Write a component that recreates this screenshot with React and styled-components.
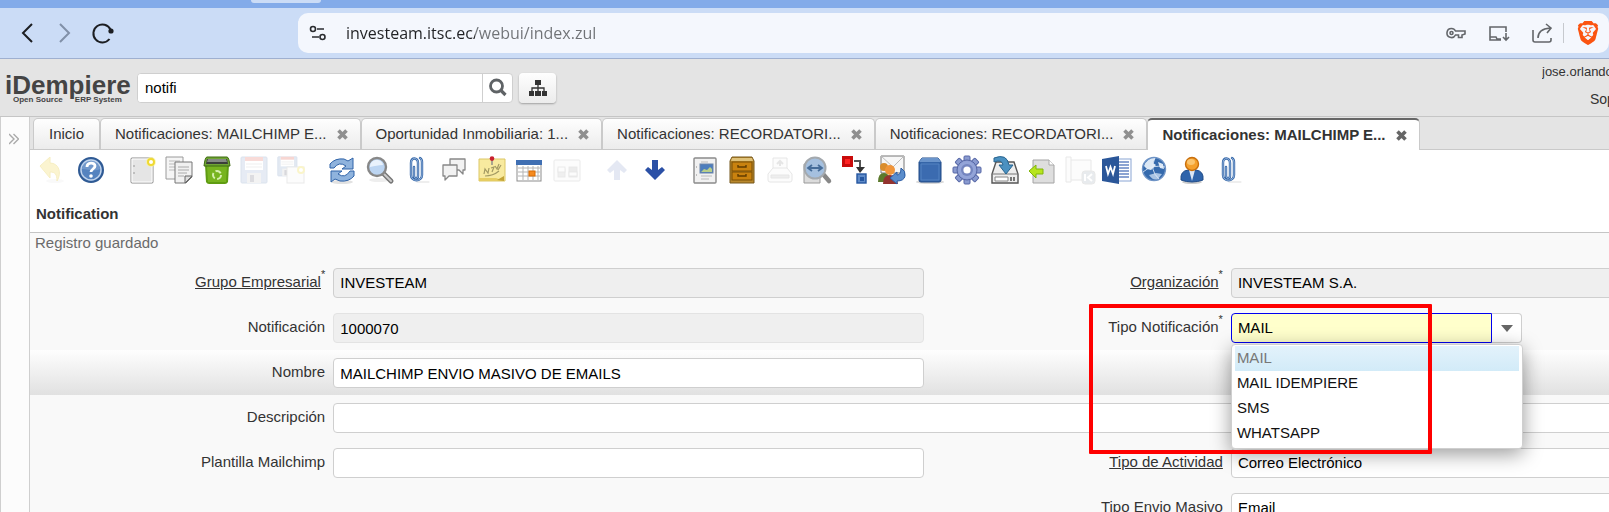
import React, { useState } from "react";
import styled, { createGlobalStyle } from "styled-components";
import { SiBrave } from "react-icons/si";

const GlobalStyle = createGlobalStyle`
  * {
    box-sizing: border-box;
  }
  html, body {
    margin: 0;
    overflow: hidden;
  }
  body, input, button {
    font-family: "Liberation Sans", Arial, sans-serif;
    font-size: 15px;
  }
  button {
    margin: 0;
    padding: 0;
    border: 0;
    background: none;
    color: inherit;
  }
`;

/* ---------- toolbar drawings, all on a 28x28 grid ---------- */

const clip = (
  <g fill="none" strokeLinecap="round">
    <path d="M14 26h12" stroke="#ddd" strokeWidth="1" />
    <path
      d="M11 11v9c0 3 4 3 4 0V7c0-6-7-6-7 0v12c0 7 11 7 11 0V6q0-3-2-4"
      stroke="#3567a8"
      strokeWidth="2.4"
    />
    <path
      d="M11 11v9c0 3 4 3 4 0V7c0-6-7-6-7 0v12c0 7 11 7 11 0V6q0-3-2-4"
      stroke="#a9c4e6"
      strokeWidth="0.8"
    />
  </g>
);

const floppy = (
  <g>
    <rect x="1" y="1" width="26" height="26" rx="1" fill="#8fa9cf" stroke="#5f7fb0" />
    <rect x="5" y="1" width="18" height="13" fill="#fff" />
    <rect x="5" y="1" width="18" height="4" fill="#e06050" />
    <path d="M6 8h16M6 11h16" stroke="#bbb" />
    <rect x="7" y="17" width="14" height="10" fill="#ccc" />
    <rect x="10" y="19" width="4" height="7" fill="#667" />
  </g>
);

const icons = {
  undo: (
    <g opacity="0.35">
      <ellipse cx="15" cy="25" rx="9" ry="2" fill="#eee" />
      <path
        d="M0 10 10 1v6c9 0 12 10 7 18 0-7-2-9-7-9v6z"
        fill="#f6e27a"
        stroke="#e6cf55"
        strokeLinejoin="round"
      />
    </g>
  ),
  help: (
    <g>
      <circle cx="14" cy="14" r="12" fill="#4a78b5" stroke="#2f5a94" strokeWidth="2" />
      <circle cx="14" cy="14" r="10" fill="#5583bf" stroke="#c3d5ec" strokeWidth="1.4" />
      <path d="M5 13c0-11 18-11 18 0-6 3-12 0-18 0z" fill="#84a6d3" opacity="0.6" />
      <path d="M10 11c0-5 8-5 8-1 0 3-4 3-4 6" fill="none" stroke="#fff" strokeWidth="2.8" />
      <circle cx="14" cy="20" r="1.8" fill="#fff" />
    </g>
  ),
  create: (
    <g>
      <rect x="3" y="2" width="22" height="25" rx="1" fill="#e5e5e5" stroke="#8c8c8c" />
      <path d="M4 3h20v23H4z" fill="none" stroke="#fff" />
      <path d="M5 10h2M5 17h2" stroke="#999" />
      <circle cx="23" cy="6" r="5" fill="#fbf3a0" opacity="0.7" />
      <circle cx="23" cy="6" r="3" fill="#fff" stroke="#efd932" strokeWidth="2" />
    </g>
  ),
  copy: (
    <g stroke="#9a9a9a">
      <path d="M1 1h17v22H1z" fill="#f5f5f5" />
      <path d="M4 5h11M4 8h11M4 11h8M4 14h8" stroke="#bbb" />
      <path d="M10 6h17v15l-6 6H10z" fill="#f1f1f1" stroke="#777" />
      <path d="M13 11h11M13 14h11M13 17h9M13 20h6" stroke="#aaa" />
      <path d="M27 20h-7v7z" fill="#ddd" stroke="#666" />
    </g>
  ),
  trash: (
    <g>
      <path d="M2 9h24l-1 17q-1 2-3 2H6q-2 0-3-2z" fill="#5f9c12" />
      <path d="M4 10h20l-1 16H5z" fill="#77b41f" />
      <path d="M4 1h20q2 0 3 9H1Q2 1 4 1z" fill="#6fa534" stroke="#3f6b10" />
      <path d="M4 3h20l1 5H3z" fill="#3b3f3a" />
      <path d="M5 3h18l1 3H4z" fill="#858a83" />
      <circle cx="14" cy="19" r="4" fill="none" stroke="#d6efad" strokeWidth="2" strokeDasharray="6 2.4" />
    </g>
  ),
  save: <g opacity="0.22">{floppy}</g>,
  saveNew: (
    <g opacity="0.25">
      <g transform="scale(.74)">{floppy}</g>
      <rect x="10" y="11" width="17" height="16" fill="#f6f6f6" stroke="#aaa" />
      <circle cx="24" cy="14" r="3" fill="#fff" stroke="#efd932" strokeWidth="2" />
    </g>
  ),
  refresh: (
    <g stroke="#2f63a8" strokeLinejoin="round">
      <ellipse cx="14" cy="26" rx="11" ry="2" fill="#e2e2e2" stroke="none" />
      <path d="M2 12V8q5-6 14-5l4 2 5-3v11H14l4-3q-7-5-12 2z" fill="#8fb3dd" />
      <path d="M26 15v5q-5 6-14 5l-5-2-4 3V15h11l-4 3q7 5 12-3z" fill="#8fb3dd" />
    </g>
  ),
  find: (
    <g>
      <ellipse cx="14" cy="24" rx="10" ry="2" fill="#eee" />
      <path d="m18 17 8 8" stroke="#777" strokeWidth="5" strokeLinecap="round" />
      <path d="m18 17 8 8" stroke="#ccc" strokeWidth="2" strokeLinecap="round" />
      <circle cx="12" cy="11" r="9" fill="#bcd5f2" stroke="#888" strokeWidth="2.4" />
      <path d="M5 11c0-9 12-9 13-2-5 0-8 1-13 2z" fill="#e9f2fc" />
    </g>
  ),
  attach: clip,
  chat: (
    <g stroke="#888" strokeWidth="1.3" fill="#f2f2f2" strokeLinejoin="round">
      <path d="M10 3h15v11h-2v4l-4-4h-9z" />
      <path d="M3 9h14v11H9l-4 4v-4H3z" />
    </g>
  ),
  note: (
    <g>
      <path d="M1 3h26v22H1z" fill="#f8ea9f" stroke="#dcc766" />
      <path d="M1 22h17l8 3H1z" fill="#e6cd62" />
      <path
        d="m6 18 1-5 3 4 1-5M13 12l3-1-2 5M17 10l2 3 2-5M20 14l3-5M7 20q8 0 14-5"
        stroke="#a39a63"
        strokeWidth="1.2"
        fill="none"
      />
      <path d="m19 24 7-4v5z" fill="#c2a337" />
      <path d="M14 4v5" stroke="#888" strokeWidth="1.4" />
      <circle cx="14" cy="2.6" r="2.3" fill="#c8202f" />
    </g>
  ),
  grid: (
    <g>
      <rect x="2" y="5" width="24" height="20" fill="#fff" stroke="#8d8d8d" />
      <rect x="1" y="4" width="26" height="5" fill="#3f6fb3" />
      <path d="M3 12h22M3 16h22M3 20h22M8 10v14M13 10v14M18 10v14M23 10v14" stroke="#b5b5b5" />
      <rect x="14" y="15" width="6" height="5" fill="#f58a1f" stroke="#d96b00" />
    </g>
  ),
  history: (
    <g opacity="0.18" stroke="#888" fill="#f4f4f4">
      <rect x="1" y="4" width="26" height="21" rx="1" />
      <rect x="5" y="13" width="7" height="8" fill="#aaa" />
      <rect x="5" y="11" width="7" height="5" />
      <rect x="16" y="11" width="8" height="10" fill="#999" />
      <rect x="16" y="16" width="8" height="4" />
    </g>
  ),
  up: (
    <path d="M14 4 4 14l3 3 4-3v10h6V14l4 3 3-3z" fill="#2b50a6" opacity="0.13" />
  ),
  down: <path d="M14 24 4 14l3-3 4 3V4h6v10l4-3 3 3z" fill="#2b50a6" />,
  report: (
    <g>
      <rect x="3" y="2" width="22" height="25" rx="1" fill="#f1f1f1" stroke="#8b8b8b" strokeWidth="1.4" />
      <path d="M5 11h1M5 19h1" stroke="#888" />
      <path d="M10 6h7M10 20h11M10 23h8" stroke="#bbb" />
      <rect x="9" y="8" width="13" height="9" fill="#4c7dbd" stroke="#6d86a9" />
      <path d="m10 16 3-3 3 1 3-3 2 2v3z" fill="#b8cf8a" />
    </g>
  ),
  archive: (
    <g>
      <path d="M4 1h20l2 4v22H2V5z" fill="#b9882c" stroke="#75561b" />
      <path d="M4 2h20l1 3H3z" fill="#dfc178" />
      <rect x="4" y="6" width="20" height="9" fill="#c9820f" stroke="#7b4f05" />
      <rect x="4" y="16" width="20" height="8" fill="#c9820f" stroke="#7b4f05" />
      <path d="M10 9v2h8V9M10 18v2h8v-2" fill="none" stroke="#613d00" strokeWidth="1.4" />
    </g>
  ),
  print: (
    <g opacity="0.16" stroke="#666" fill="#eee">
      <path d="M7 2h14v13H7z" />
      <path d="M2 18l5-6h14l5 6v6q0 2-2 2H4q-2 0-2-2z" />
      <path d="M14 10V5m-3 3 3-3 3 3" fill="none" strokeWidth="2" />
      <path d="M5 19h18v3H5z" fill="#999" />
    </g>
  ),
  zoom: (
    <g>
      <path d="M1 8h16v19H1z" fill="#dcdcdc" stroke="#9a9a9a" />
      <path d="m20 18 6 7" stroke="#888" strokeWidth="4.5" strokeLinecap="round" />
      <circle cx="12" cy="12" r="10.5" fill="#a5c0df" stroke="#a4a9ae" strokeWidth="2" />
      <path d="M6 12h12M9 9l-4 3 4 3M15 9l4 3-4 3" fill="none" stroke="#456c99" strokeWidth="1.8" />
    </g>
  ),
  workflow: (
    <g>
      <rect x="1" y="0" width="11" height="11" fill="#c90b0b" />
      <rect x="4" y="3" width="5" height="5" fill="#f22" />
      <path d="M13 5h6v7" fill="none" stroke="#555" strokeWidth="2" />
      <path d="M15 11h9l-5 6z" fill="#333" />
      <rect x="16" y="18" width="9" height="9" fill="#5f8bc8" stroke="#2456a0" strokeWidth="1.4" />
      <rect x="19" y="21" width="4" height="4" fill="#2456a0" />
    </g>
  ),
  request: (
    <g>
      <path d="M3 0h23v17H3z" fill="#f7f7f7" stroke="#777" />
      <path d="m3 0 12 11L26 0" fill="none" stroke="#bbb" />
      <circle cx="6" cy="11" r="4" fill="#d98d2e" />
      <path d="M0 26q0-9 6-9t6 9z" fill="#5c7a2c" />
      <circle cx="12" cy="14" r="5" fill="#f0953a" />
      <path d="M5 28q0-9 7-9t8 9z" fill="#93332f" />
      <path d="m12 22 7-6v3q4 0 4-7 5 3 4 8-1 5-8 5v3z" fill="#5b8dcb" stroke="#2b5da5" />
    </g>
  ),
  product: (
    <g>
      <ellipse cx="14" cy="26" rx="14" ry="2" fill="#d8d8d8" />
      <path d="M6 2h16l3 4v18q0 2-2 2H5q-2 0-2-2V6z" fill="#3565a8" stroke="#214a87" />
      <path d="M6 2h16l3 4H3z" fill="#6a94cb" />
      <path d="M5 8h18v16H5z" fill="#3b6bb0" stroke="#5484c2" />
    </g>
  ),
  gear: (
    <g>
      <g fill="#8a9bd0" stroke="#5667a6">
        {[0, 45, 90, 135].map((angle) => (
          <rect key={angle} x="11" y="0" width="6" height="28" rx="1" transform={`rotate(${angle} 14 14)`} />
        ))}
        <circle cx="14" cy="14" r="10" />
      </g>
      <circle cx="14" cy="14" r="9" fill="#93a4d8" />
      <circle cx="14" cy="14" r="6" fill="#7485bf" />
      <circle cx="14" cy="14" r="3.6" fill="#fff" />
    </g>
  ),
  exportFile: (
    <g>
      <path d="M5 6h18l4 12v9H1v-9z" fill="#eee" stroke="#555" strokeWidth="1.4" />
      <path d="M1 18h26" stroke="#777" />
      <path d="M4 21h13v4H4z" fill="#fff" stroke="#888" />
      <path d="M20 21v4M23 21v4" stroke="#444" strokeWidth="1.4" />
      <path d="M3 2q13-5 15 7h4l-7 9-7-9h4Q11 3 3 6z" fill="#4b91c1" stroke="#28648f" />
    </g>
  ),
  importFile: (
    <g>
      <path d="M5 4h16l5 5v18H5z" fill="#dedede" stroke="#a4a4a4" />
      <path d="M21 4v5h5" fill="#fff" stroke="#aaa" />
      <path d="M1 15 8 9v4h7v5H8v4z" fill="#b7e51e" stroke="#80b50b" />
    </g>
  ),
  script: (
    <g opacity="0.16" stroke="#777" fill="#eee">
      <path d="M4 4h21v20H4z" />
      <path d="M0 1h5v25H0z" />
      <rect x="16" y="15" width="13" height="13" rx="3" fill="#789" />
      <path d="M19 18v7M26 18l-4 3.5 4 3.5" fill="none" stroke="#fff" strokeWidth="2" />
    </g>
  ),
  word: (
    <g>
      <rect x="14" y="3" width="14" height="22" fill="#fff" stroke="#8aa5d4" />
      <path d="M16 6h10M16 9h10M16 12h10M16 15h10M16 18h10M16 21h10" stroke="#6787c4" strokeWidth="1.4" />
      <path d="M-1 3 16 0v28L-1 25z" fill="#2a5699" />
      <path d="m3 10 2 8 2.500-7L10 18l2-8" fill="none" stroke="#fff" strokeWidth="1.8" />
    </g>
  ),
  web: (
    <g>
      <circle cx="14" cy="13" r="11.5" fill="#356aad" stroke="#6f94c6" strokeWidth="1.4" />
      <path d="M4 10q3-8 11-8l-2 5 3 2-5 5-4-1zM18 6l5 2 1 5-4-1z" fill="#dce8f5" />
      <path d="m9 19 7-2 6 1-4 5q-5 2-9-4z" fill="#a9c4e4" />
      <path d="M3 16q9-8 22-5M15 2q-6 12 4 21" fill="none" stroke="#e6effa" strokeWidth="0.8" />
    </g>
  ),
  user: (
    <g>
      <ellipse cx="14" cy="26" rx="10" ry="2" fill="#ccc" />
      <path d="M3 24q-1-9 7-10h8q8 1 7 10-11 4-22 0z" fill="#2f64ab" stroke="#1f4b88" />
      <path d="m11 14 3 11 3-11z" fill="#dbe6f4" />
      <circle cx="14" cy="8" r="6.5" fill="#f5a02c" stroke="#c96f0c" strokeWidth="1.4" />
      <ellipse cx="13" cy="6" rx="4" ry="3" fill="#fbc56f" />
    </g>
  ),
  clip,
};

const tools = [
  ["undo", "help"],
  ["create", "copy", "trash", "save", "saveNew"],
  ["refresh", "find", "attach", "chat", "note", "grid", "history"],
  ["up", "down"],
  [
    "report", "archive", "print", "zoom", "workflow", "request", "product", "gear",
    "exportFile", "importFile", "script", "word", "web", "user", "clip",
  ],
];

const tabs = [
  { title: "Inicio" },
  { title: "Notificaciones: MAILCHIMP E...", closable: true },
  { title: "Oportunidad Inmobiliaria: 1...", closable: true },
  { title: "Notificaciones: RECORDATORI...", closable: true },
  { title: "Notificaciones: RECORDATORI...", closable: true },
  { title: "Notificaciones: MAILCHIMP E...", closable: true, active: true },
];

const options = ["MAIL", "MAIL IDEMPIERE", "SMS", "WHATSAPP"];

function BrowserBar() {
  return (
    <BrowserBarStyled>
      <NavButtons>
        <NavButton aria-label="Back">
          <svg width="24" height="24" viewBox="0 0 24 24">
            <path d="m17 3-9 9 9 9" />
          </svg>
        </NavButton>
        <NavButton aria-label="Forward" $faded>
          <svg width="24" height="24" viewBox="0 0 24 24">
            <path d="m7 3 9 9-9 9" />
          </svg>
        </NavButton>
        <NavButton aria-label="Reload">
          <svg width="24" height="24" viewBox="0 0 24 24">
            <path d="M19.5 8.500a9 9 0 1 0-1 9.500" />
            <circle cx="20" cy="10" r="2.6" fill="currentColor" stroke="none" />
          </svg>
        </NavButton>
      </NavButtons>
      <AddressBar>
        <svg width="18" height="18" viewBox="0 0 18 18">
          <circle cx="4" cy="5" r="2.5" />
          <path d="M8 5h7M3 13h7" />
          <circle cx="13.5" cy="13" r="2.5" />
        </svg>
        <Url aria-label="Address" defaultValue="investeam.itsc.ec/webui/index.zul" />
        <AddressActions>
          <button aria-label="Passwords">
            <svg width="22" height="22" viewBox="0 0 22 22">
              <path d="M6.500 6.500a4.500 4.500 0 1 0 4 6.500h3v2.500h3.500V13l3-1V9h-9.500a4.500 4.500 0 0 0-4-2.500z" />
              <circle cx="6.5" cy="11" r="1.5" />
            </svg>
          </button>
          <button aria-label="Install">
            <svg width="22" height="22" viewBox="0 0 22 22">
              <path d="M18 10V5H2v13h11M2 15h6l1 2h4M18 11v7m-3-3 3 3 3-3" />
            </svg>
          </button>
          <button aria-label="Share">
            <svg width="22" height="22" viewBox="0 0 22 22">
              <path d="M2 8v10q0 2 2 2h14q2 0 2-2v-2M7 16q0-9 12-10M15 2l5 4-4 5" />
            </svg>
          </button>
        </AddressActions>
        <BraveButton aria-label="Brave Shields">
          <SiBrave size={24} />
        </BraveButton>
      </AddressBar>
    </BrowserBarStyled>
  );
}

function AppHeader() {
  return (
    <HeaderStyled>
      <Logo>
        <strong>iDempiere</strong>
        <small>
          <span>Open Source</span>
          <span>ERP System</span>
        </small>
      </Logo>
      <SearchBox>
        <input aria-label="Buscar" defaultValue="notifi" />
        <button aria-label="Buscar">
          <svg width="20" height="20" viewBox="0 0 20 20" fill="none" stroke="#5f6366">
            <circle cx="8.5" cy="8" r="6" strokeWidth="2.8" />
            <path d="m13 12.500 4.500 4.500" strokeWidth="3.2" />
          </svg>
        </button>
      </SearchBox>
      <MenuButton aria-label="Menú">
        <svg width="18" height="16" viewBox="0 0 18 16" fill="#333">
          <path d="M6 0h6v5H6zM0 11h5v5H0zM6 11h6v5H6zM13 11h5v5h-5z" />
          <path d="M9 5v6M3 11V8h12v3" fill="none" stroke="#333" strokeWidth="1.3" />
        </svg>
      </MenuButton>
      <Account>
        <a href="#user">jose.orlando</a>
        <p>Sop</p>
      </Account>
    </HeaderStyled>
  );
}

function Field({ id, label, required, zoomable, wide, children, ...rest }) {
  return (
    <>
      <Label htmlFor={id} $zoomable={zoomable}>
        <span>{label}</span>
        {required && <sup>*</sup>}
      </Label>
      <FieldCell $wide={wide}>
        {children || <TextBox id={id} {...rest} />}
      </FieldCell>
    </>
  );
}

function TypeCombo() {
  const [value, setValue] = useState("MAIL");
  return (
    <Combo>
      <ComboInput id="type" role="combobox" aria-expanded="true" value={value} readOnly />
      <ComboButton aria-label="Abrir">
        <svg width="12" height="7" viewBox="0 0 12 7">
          <path d="M0 0h12L6 7z" fill="#666" />
        </svg>
      </ComboButton>
      <Popup role="listbox">
        {options.map((o) => (
          <Option
            key={o}
            role="option"
            aria-selected={o === value}
            $selected={o === value}
            onClick={() => setValue(o)}
          >
            {o}
          </Option>
        ))}
      </Popup>
      <Marker />
    </Combo>
  );
}

function App() {
  return (
    <Page>
      <GlobalStyle />
      <WindowStrip>
        <WindowTab />
      </WindowStrip>
      <BrowserBar />
      <AppHeader />
      <Body>
        <Sidebar>
          <button aria-label="Expandir">
            <svg width="10" height="12" viewBox="0 0 10 12" fill="none" stroke="#aaa" strokeWidth="1.4">
              <path d="m0 1 5 5-5 5M4.500 1l5 5-5 5" />
            </svg>
          </button>
        </Sidebar>
        <Main>
          <TabStrip>
            {tabs.map((tab, i) => (
              <Tab key={i} $active={tab.active} $closable={tab.closable}>
                <button>{tab.title}</button>
                {tab.closable && (
                  <button aria-label="Cerrar">
                    <svg width="11" height="11" viewBox="0 0 11 11">
                      <path d="m1.500 1.500 8 8m0-8-8 8" stroke="currentColor" strokeWidth="3.6" />
                    </svg>
                  </button>
                )}
              </Tab>
            ))}
          </TabStrip>
          <Toolbar>
            {tools.map((group, i) => (
              <React.Fragment key={i}>
                {i > 0 && <Separator />}
                {group.map((name) => (
                  <ToolButton key={name} aria-label={name}>
                    <svg width="28" height="28" viewBox="0 0 28 28" overflow="visible">
                      {icons[name]}
                    </svg>
                  </ToolButton>
                ))}
              </React.Fragment>
            ))}
          </Toolbar>
          <Title>Notification</Title>
          <Status>Registro guardado</Status>
          <Form>
            <Row>
              <Field id="client" label="Grupo Empresarial" required zoomable $lookup defaultValue="INVESTEAM" readOnly />
              <Field id="org" label="Organización" required zoomable $lookup defaultValue="INVESTEAM S.A." readOnly />
            </Row>
            <Row>
              <Field id="number" label="Notificación" defaultValue="1000070" disabled />
              <Field id="type" label="Tipo Notificación" required>
                <TypeCombo />
              </Field>
            </Row>
            <Row $current>
              <Field id="name" label="Nombre" defaultValue="MAILCHIMP ENVIO MASIVO DE EMAILS" />
            </Row>
            <Row>
              <Field id="description" label="Descripción" wide />
            </Row>
            <Row>
              <Field id="template" label="Plantilla Mailchimp" />
              <Field id="activity" label="Tipo de Actividad" zoomable $lookup defaultValue="Correo Electrónico" />
            </Row>
            <Row>
              <Empty />
              <Field id="bulk" label="Tipo Envio Masivo" $lookup defaultValue="Email" />
            </Row>
          </Form>
        </Main>
      </Body>
    </Page>
  );
}

const Page = styled.div`
  display: flex;
  flex-direction: column;
  height: 100vh;
  overflow: hidden;
  background: #f9f9f9;
  color: #333;
`;

const WindowStrip = styled.div`
  flex: none;
  height: 8px;
  padding-left: 251px;
  background: #83abe9;
`;

const WindowTab = styled.div`
  width: 70px;
  height: 3px;
  border-radius: 0 0 8px 8px;
  background: #cbdcf6;
`;

const BrowserBarStyled = styled.div`
  flex: none;
  display: flex;
  height: 51px;
  padding: 5px 0;
  background: #cbdcf6;
  border-bottom: 1px solid #9fb0d0;
`;

const NavButtons = styled.div`
  display: flex;
  align-items: center;
  gap: 14px;
  width: 298px;
  padding-left: 15px;
`;

const NavButton = styled.button`
  width: 24px;
  height: 24px;
  color: ${(props) => (props.$faded ? "#8190a8" : "#1c1e22")};
  svg {
    fill: none;
    stroke: currentColor;
    stroke-width: 2;
  }
`;

const AddressBar = styled.div`
  flex: 1;
  display: flex;
  align-items: center;
  gap: 10px;
  padding: 0 9px 0 11px;
  border-radius: 10px;
  background: #f4f7fd;
  svg {
    flex: none;
    fill: none;
    stroke: #2a2c30;
    stroke-width: 1.6;
  }
`;

/* host is dark, the path after it is grey */
const Url = styled.input`
  flex: 1;
  min-width: 0;
  padding: 0 0 0 9px;
  border: 0;
  outline: 0;
  font-family: "Open Sans", "Noto Sans", sans-serif;
  font-size: 16px;
  line-height: 24px;
  color: #202124;
  background: linear-gradient(to right, #202124 138px, #6f7276 138px);
  -webkit-background-clip: text;
  background-clip: text;
  -webkit-text-fill-color: transparent;
`;

const AddressActions = styled.div`
  display: flex;
  gap: 21px;
  button {
    width: 22px;
    height: 22px;
  }
  svg {
    stroke: #63666a;
    stroke-width: 1.6;
  }
`;

const BraveButton = styled.button`
  display: flex;
  align-items: center;
  padding-left: 12px;
  height: 20px;
  border-left: 1px solid #c6c9ce;
  && svg {
    fill: #fb5411;
    stroke: none;
  }
`;

const HeaderStyled = styled.header`
  flex: none;
  display: flex;
  align-items: center;
  height: 58px;
  padding-left: 5px;
  background: #e4e4e4;
  border-bottom: 1px solid #c5c5c5;
`;

const Logo = styled.div`
  width: 132px;
  color: #444;
  font-weight: bold;
  strong {
    display: block;
    font-size: 26px;
    line-height: 24px;
  }
  small {
    display: flex;
    gap: 12px;
    padding-left: 8px;
    font-size: 8px;
    line-height: 6px;
  }
`;

const SearchBox = styled.div`
  display: flex;
  width: 376px;
  height: 30px;
  border: 1px solid #cfcfcf;
  border-radius: 4px;
  background: #fff;
  overflow: hidden;
  input {
    flex: 1;
    min-width: 0;
    padding: 0 7px;
    border: 0;
    outline: 0;
    color: #000;
  }
  button {
    display: flex;
    align-items: center;
    justify-content: center;
    width: 30px;
    border-left: 1px solid #cfcfcf;
  }
`;

const MenuButton = styled.button`
  display: flex;
  align-items: center;
  justify-content: center;
  width: 37px;
  height: 30px;
  margin-left: 6px;
  border-radius: 4px;
  background: linear-gradient(#fefefe, #ececec);
  box-shadow: 0 1px 2px rgba(0, 0, 0, 0.3);
`;

const Account = styled.div`
  width: 67px;
  margin-left: auto;
  padding-bottom: 5px;
  overflow: hidden;
  white-space: nowrap;
  a {
    display: block;
    font-size: 13px;
    line-height: 18px;
    color: #333;
    text-decoration: none;
  }
  p {
    margin: 9px 0 0;
    padding-left: 48px;
    font-size: 14px;
    line-height: 18px;
  }
`;

const Body = styled.div`
  flex: 1;
  display: flex;
  min-height: 0;
`;

const Sidebar = styled.aside`
  flex: none;
  width: 30px;
  padding: 14px 0 0 8px;
  border: 1px solid #cfcfcf;
  border-width: 0 1px;
  background: #fcfcfc;
`;

const Main = styled.main`
  flex: 1;
  min-width: 0;
`;

const TabStrip = styled.nav`
  display: flex;
  height: 33px;
  padding: 1px 0 0 3px;
  border-bottom: 1px solid #c9c9c9;
  background: #e4e4e4;
`;

const Tab = styled.div`
  flex: none;
  display: flex;
  align-items: center;
  gap: 10px;
  height: ${(props) => (props.$active ? "32px" : "31px")};
  padding: ${(props) => (props.$closable ? "0 12px 0 14px" : "0 15px")};
  border: 1px solid #cacaca;
  border-bottom: 0;
  border-top: ${(props) => (props.$active ? "2px solid #666" : "1px solid #cacaca")};
  border-radius: 5px 5px 0 0;
  background: ${(props) => (props.$active ? "#fff" : "linear-gradient(#fefefe, #ececec)")};
  white-space: nowrap;
  button {
    font-weight: ${(props) => (props.$active ? "bold" : "normal")};
    line-height: 18px;
  }
  button + button {
    height: 14px;
    line-height: 0;
    color: ${(props) => (props.$active ? "#666" : "#8f8f8f")};
  }
`;

/* buttons share 1212px evenly, less when the window is narrow */
const Toolbar = styled.div`
  display: flex;
  height: 40px;
  padding: 6px max(0px, calc(100% - 1218px)) 6px 5px;
  background: #fff;
`;

const ToolButton = styled.button`
  flex: 1;
  display: flex;
  justify-content: center;
  min-width: 0;
`;

const Separator = styled.span`
  flex: none;
  width: 13px;
`;

const Title = styled.h1`
  margin: 0;
  padding: 15px 6px;
  height: 43px;
  border-bottom: 1px solid #c5c5c5;
  background: #fff;
  font-size: 15px;
  line-height: 18px;
`;

const Status = styled.p`
  margin: 0;
  height: 27px;
  padding: 1px 5px;
  line-height: 18px;
  color: #6b6b6b;
`;

/* wider than the window, the right column runs off the edge */
const Form = styled.form`
  width: 113.7%;
`;

const Row = styled.div`
  display: grid;
  grid-template-columns: 1fr 2fr 1fr 2fr;
  height: 45px;
  background: ${(props) => (props.$current ? "linear-gradient(#fefefe, #e1e1e1)" : "none")};
`;

const Label = styled.label`
  padding: 13px 4px 0 0;
  line-height: 18px;
  text-align: right;
  white-space: nowrap;
  span {
    text-decoration: ${(props) => (props.$zoomable ? "underline" : "none")};
  }
  sup {
    font-size: 11px;
    line-height: 0;
    vertical-align: 9px;
  }
`;

const FieldCell = styled.div`
  grid-column: ${(props) => (props.$wide ? "span 3" : "auto")};
  min-width: 0;
  padding: 8px 4px 7px;
`;

const Empty = styled.div`
  grid-column: span 2;
`;

const TextBox = styled.input`
  display: block;
  width: 100%;
  height: 30px;
  padding: ${(props) => (props.$lookup ? "0 6px 2px" : "0 6px")};
  border: 1px solid #cfcfcf;
  border-radius: 4px;
  outline: 0;
  background: #fff;
  color: #000;
  &:read-only,
  &:disabled {
    background: #efefef;
  }
  &:disabled {
    border-color: #e3e3e3;
  }
`;

const Combo = styled.div`
  position: relative;
  display: flex;
  width: 291px;
`;

const ComboInput = styled.input`
  flex: 1;
  min-width: 0;
  height: 30px;
  padding: 0 6px 2px;
  border: 1px solid #0000f0;
  border-radius: 4px 0 0 4px;
  outline: 0;
  background: #ffffcc;
  color: #000;
`;

const ComboButton = styled.button`
  display: flex;
  align-items: center;
  justify-content: center;
  width: 30px;
  height: 30px;
  padding-left: 2px;
  border: 1px solid #cfcfcf;
  border-left: 0;
  border-radius: 0 4px 4px 0;
  background: #fff;
`;

const Popup = styled.ul`
  position: absolute;
  z-index: 1;
  top: 31px;
  left: 0;
  width: 292px;
  margin: 0;
  padding: 1px 3px 2px;
  border: 1px solid #cfcfcf;
  border-radius: 4px;
  background: #fff;
  box-shadow: 0 5px 20px rgba(0, 0, 0, 0.4);
  list-style: none;
`;

const Option = styled.li`
  padding: 0 2px 1px;
  line-height: 24px;
  color: ${(props) => (props.$selected ? "#777" : "#111")};
  background: ${(props) => (props.$selected ? "linear-gradient(#e3f2fb, #d2ebf8)" : "none")};
`;

const Marker = styled.div`
  position: absolute;
  z-index: 2;
  top: -9px;
  left: -142px;
  width: 343px;
  height: 150px;
  border: 4px solid #ff0000;
  border-radius: 1px;
  pointer-events: none;
`;

export default App;
